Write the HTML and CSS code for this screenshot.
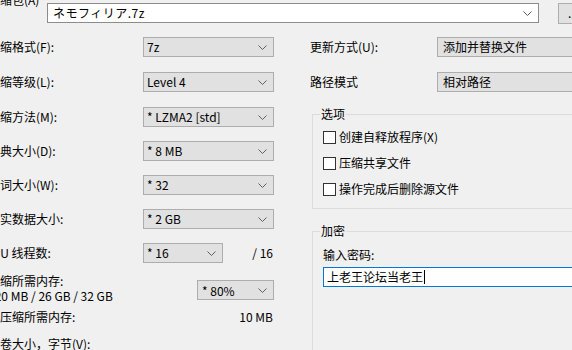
FILE: index.html
```html
<!DOCTYPE html>
<html lang="zh-CN">
<head>
    <meta charset="UTF-8">
    <title>添加到压缩包</title>
    <link rel="stylesheet" href="styles.css">
</head>
<body>
    <div class="dlg">
        <div class="top">
            <span class="top-label">压缩包(A)</span>
            <div class="combo path">
                <span class="jp">ネモフィリア.7z</span>
                <svg class="chev" width="9" height="5" viewBox="0 0 9 5"><path d="M0.5 0.5 L4.5 4.5 L8.5 0.5" /></svg>
            </div>
            <div class="btn">...</div>
        </div>

        <div class="cols">
            <div class="left">
                <div class="row tall">
                    <span class="lbl">压缩格式(F):</span>
                    <div class="combo"><span>7z</span><svg class="chev" width="9" height="5" viewBox="0 0 9 5"><path d="M0.5 0.5 L4.5 4.5 L8.5 0.5" /></svg></div>
                </div>
                <div class="row tall">
                    <span class="lbl">压缩等级(L):</span>
                    <div class="combo"><span>Level 4</span><svg class="chev" width="9" height="5" viewBox="0 0 9 5"><path d="M0.5 0.5 L4.5 4.5 L8.5 0.5" /></svg></div>
                </div>
                <div class="row">
                    <span class="lbl">压缩方法(M):</span>
                    <div class="combo"><span>* LZMA2 [std]</span><svg class="chev" width="9" height="5" viewBox="0 0 9 5"><path d="M0.5 0.5 L4.5 4.5 L8.5 0.5" /></svg></div>
                </div>
                <div class="row">
                    <span class="lbl">字典大小(D):</span>
                    <div class="combo"><span>* 8 MB</span><svg class="chev" width="9" height="5" viewBox="0 0 9 5"><path d="M0.5 0.5 L4.5 4.5 L8.5 0.5" /></svg></div>
                </div>
                <div class="row">
                    <span class="lbl">单词大小(W):</span>
                    <div class="combo"><span>* 32</span><svg class="chev" width="9" height="5" viewBox="0 0 9 5"><path d="M0.5 0.5 L4.5 4.5 L8.5 0.5" /></svg></div>
                </div>
                <div class="row">
                    <span class="lbl">固实数据大小:</span>
                    <div class="combo"><span>* 2 GB</span><svg class="chev" width="9" height="5" viewBox="0 0 9 5"><path d="M0.5 0.5 L4.5 4.5 L8.5 0.5" /></svg></div>
                </div>
                <div class="row threads">
                    <span class="lbl cpu">CPU 线程数:</span>
                    <div class="combo small"><span>* 16</span><svg class="chev" width="9" height="5" viewBox="0 0 9 5"><path d="M0.5 0.5 L4.5 4.5 L8.5 0.5" /></svg></div>
                    <span class="count">/ 16</span>
                </div>
                <div class="mem">
                    <div class="mem-text">
                        <div>压缩所需内存:</div>
                        <div>420 MB / 26 GB / 32 GB</div>
                    </div>
                    <div class="combo pct"><span>* 80%</span><svg class="chev" width="9" height="5" viewBox="0 0 9 5"><path d="M0.5 0.5 L4.5 4.5 L8.5 0.5" /></svg></div>
                </div>
                <div class="dec">
                    <span>解压缩所需内存:</span>
                    <span>10 MB</span>
                </div>
                <div class="vol">分卷大小，字节(V):</div>
            </div>

            <div class="right">
                <div class="row tall">
                    <span class="rlbl">更新方式(U):</span>
                    <div class="combo wide"><span>添加并替换文件</span></div>
                </div>
                <div class="row">
                    <span class="rlbl">路径模式</span>
                    <div class="combo wide"><span>相对路径</span></div>
                </div>

                <fieldset class="group opts">
                    <legend>选项</legend>
                    <label class="check"><span class="box"></span>创建自释放程序(X)</label>
                    <label class="check"><span class="box"></span>压缩共享文件</label>
                    <label class="check"><span class="box"></span>操作完成后删除源文件</label>
                </fieldset>

                <fieldset class="group enc">
                    <legend>加密</legend>
                    <div class="pw-label">输入密码:</div>
                    <div class="pw">上老王论坛当老王<span class="caret"></span></div>
                </fieldset>
            </div>
        </div>
    </div>
</body>
</html>
```

FILE: styles.css
```css
body {
    margin: 0;
    width: 572px;
    height: 350px;
    overflow: hidden;
    background: #f0f0f0;
    color: #000;
    font-family: "Noto Sans CJK SC", sans-serif;
    font-size: 12px;
    line-height: 16px;
}
.dlg {
    margin-left: -12px;
    width: 760px;
}
.top {
    display: flex;
    align-items: flex-start;
    margin-top: 3px;
}
.top-label {
    width: 59px;
    margin-top: -11px;
}
.combo {
    box-sizing: border-box;
    width: 131px;
    height: 20px;
    border: 1px solid #adadad;
    background: #e1e1e1;
    display: flex;
    align-items: center;
    justify-content: space-between;
    padding: 0 6px 0 3px;
    white-space: nowrap;
}
.chev path {
    fill: none;
    stroke: #5f5f5f;
    stroke-width: 1;
}
.combo.path {
    width: 492px;
    background: #fff;
    border-color: #8c8c8c;
    padding-left: 5px;
}
.jp {
    font-family: "Noto Sans CJK JP", sans-serif;
    letter-spacing: 0.5px;
}
.btn {
    box-sizing: border-box;
    width: 30px;
    height: 21px;
    margin-left: 19px;
    border: 1px solid #adadad;
    background: #e1e1e1;
    text-align: center;
    line-height: 17px;
}
.cols {
    display: flex;
    margin-top: 13px;
}
.left {
    width: 286px;
    flex: none;
}
.right {
    margin-left: 36px;
    flex: 1;
}
.row {
    display: flex;
    align-items: center;
    height: 20px;
    margin-bottom: 14px;
}
.row.tall {
    margin-bottom: 15px;
}
.row.threads {
    margin-bottom: 10px;
}
.lbl {
    width: 155px;
    flex: none;
}
.lbl.cpu {
    text-indent: -3px;
}
.combo.small {
    width: 80px;
}
.count {
    flex: 1;
    text-align: right;
    padding-right: 1px;
}
.mem {
    display: flex;
    align-items: flex-start;
    line-height: 15px;
}
.mem-text {
    width: 209px;
    flex: none;
}
.combo.pct {
    width: 77px;
    margin-top: 7px;
    padding-left: 4px;
}
.dec {
    display: flex;
    justify-content: space-between;
    margin-top: 7px;
    line-height: 14px;
    padding-right: 1px;
}
.vol {
    margin-top: 13px;
    line-height: 14px;
}
.rlbl {
    width: 127px;
    flex: none;
}
.combo.wide {
    width: 220px;
    padding-left: 5px;
}
.group {
    margin: 0 0 0 2px;
    padding: 0 10px;
    border: 1px solid #dcdcdc;
    min-width: 0;
}
.group legend {
    margin-left: -3px;
    padding: 0 1px;
    line-height: 16px;
}
.opts {
    margin-top: 9px;
    padding-bottom: 11px;
}
.check {
    display: flex;
    align-items: center;
    height: 16px;
    margin-top: 10px;
}
.check:first-of-type {
    margin-top: 7px;
}
.box {
    box-sizing: border-box;
    width: 13px;
    height: 13px;
    border: 1px solid #333;
    background: #fff;
    margin-right: 3px;
}
.enc {
    margin-top: 14px;
    height: 200px;
}
.pw-label {
    margin-top: 8px;
}
.pw {
    box-sizing: border-box;
    margin-top: 4px;
    height: 20px;
    width: 400px;
    border: 1px solid #0078d7;
    background: #fff;
    padding-left: 3px;
    display: flex;
    align-items: center;
}
.caret {
    width: 1px;
    height: 14px;
    margin-left: 1px;
    background: #000;
}
```
